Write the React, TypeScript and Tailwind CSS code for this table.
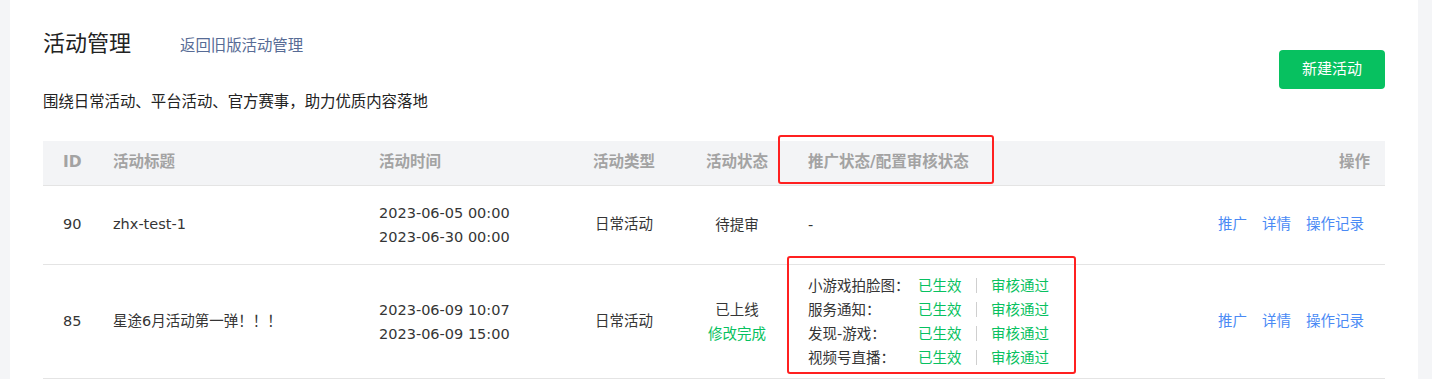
const rows = [
  {
    id: 90,
    title: 'zhx-test-1',
    start: '2023-06-05 00:00',
    end: '2023-06-30 00:00',
    type: '日常活动',
    status: '待提审',
    sub: '',
    promo: [] as string[],
  },
  {
    id: 85,
    title: '星途6月活动第一弹！！！',
    start: '2023-06-09 10:07',
    end: '2023-06-09 15:00',
    type: '日常活动',
    status: '已上线',
    sub: '修改完成',
    promo: ['小游戏拍脸图：', '服务通知：', '发现-游戏：', '视频号直播：'],
  },
];

const cols = 'grid grid-cols-[55px_266px_201px_118px_108px_1fr_280px]';

export default function App() {
  return (
    <div
      className="min-h-screen bg-[#f4f5f7] pl-[10px] pr-[14px] text-[#353535]"
      style={{ fontFamily: '"DejaVu Sans", "Noto Sans CJK SC", sans-serif' }}
    >
      <div className="min-h-[379px] bg-white px-[33px]">
        <div className="flex justify-between">
          <div className="pt-[30px]">
            <div className="flex items-baseline">
              <h1 className="text-[22px] leading-[28px] font-normal text-[#222]">活动管理</h1>
              <a className="ml-[49px] text-[15.4px] text-[#576b95]">返回旧版活动管理</a>
            </div>
            <p className="mt-[33px] text-[15.4px] leading-[22px] text-[#222]">
              围绕日常活动、平台活动、官方赛事，助力优质内容落地
            </p>
          </div>
          <button className="mt-[50px] h-[39px] w-[106px] rounded-[4px] bg-[#07c160] text-[15px] text-white">
            新建活动
          </button>
        </div>

        <div className="relative mt-[28px] text-[14.5px]">
          <div className={`${cols} h-[45px] items-center border-b border-[#e4e4e4] bg-[#f3f4f6] text-[15.5px] font-semibold text-[#a3a3a3]`}>
            <div className="pl-5">ID</div>
            <div className="pl-[15px]">活动标题</div>
            <div className="pl-[15px]">活动时间</div>
            <div className="text-center">活动类型</div>
            <div className="text-center">活动状态</div>
            <div className="pl-[17px]">推广状态/配置审核状态</div>
            <div className="pr-[15px] text-right">操作</div>
          </div>

          {rows.map((r, i) => (
            <div
              key={r.id}
              className={`${cols} items-center border-b border-[#e4e4e4] ${i === 0 ? 'h-[79px]' : 'h-[114px]'}`}
            >
              <div className="pl-5">{r.id}</div>
              <div className="pl-[15px]">{r.title}</div>
              <div className="pl-[15px] leading-[24px]">
                <div>{r.start}</div>
                <div>{r.end}</div>
              </div>
              <div className="text-center">{r.type}</div>
              <div className="text-center leading-[24px]">
                <div>{r.status}</div>
                {r.sub && <div className="text-[#07c160]">{r.sub}</div>}
              </div>
              <div className="pl-[17px] leading-[24px]">
                {r.promo.length === 0 ? (
                  <span>-</span>
                ) : (
                  r.promo.map(p => (
                    <div key={p} className="flex items-center">
                      <span className="w-[110px]">{p}</span>
                      <span className="w-[44px] text-[#07c160]">已生效</span>
                      <span className="mx-[14px] h-[15px] w-px bg-[#cfcfcf]" />
                      <span className="text-[#07c160]">审核通过</span>
                    </div>
                  ))
                )}
              </div>
              <div className="flex justify-end gap-[15px] pr-[21px] text-[#4a8af5]">
                <a>推广</a>
                <a>详情</a>
                <a>操作记录</a>
              </div>
            </div>
          ))}

          {/* annotation boxes */}
          <div className="pointer-events-none absolute left-[735px] top-[-6px] h-[49px] w-[216px] rounded-[3px] border-2 border-[#ff2020]" />
          <div className="pointer-events-none absolute left-[744px] top-[115px] h-[118px] w-[289px] rounded-[3px] border-2 border-[#ff2020]" />
        </div>
      </div>
    </div>
  );
}
